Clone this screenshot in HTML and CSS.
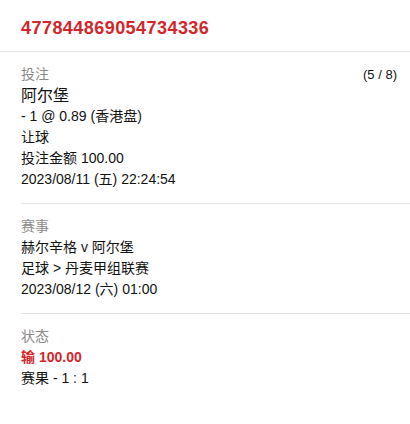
FILE: index.html
```html
<!DOCTYPE html>
<html lang="zh">
<head>
<meta charset="utf-8">
<link rel="stylesheet" href="styles.css">
</head>
<body>
<div class="page">
  <div class="header">477844869054734336</div>
  <div class="section">
    <div class="label-row"><span class="label">投注</span><span class="count">(5 / 8)</span></div>
    <div class="line big">阿尔堡</div>
    <div class="line">- 1 @ 0.89 (香港盘)</div>
    <div class="line">让球</div>
    <div class="line">投注金额 100.00</div>
    <div class="line">2023/08/11 (五) 22:24:54</div>
  </div>
  <div class="section">
    <div class="label">赛事</div>
    <div class="line">赫尔辛格 v 阿尔堡</div>
    <div class="line">足球 &gt; 丹麦甲组联赛</div>
    <div class="line">2023/08/12 (六) 01:00</div>
  </div>
  <div class="section last">
    <div class="label">状态</div>
    <div class="line loss">输 100.00</div>
    <div class="line">赛果 - 1 : 1</div>
  </div>
</div>
</body>
</html>
```
FILE: styles.css
```css
html, body {
  margin: 0;
  padding: 0;
  background: #fff;
}
body {
  font-family: "Liberation Sans", "Noto Sans CJK SC", sans-serif;
  font-size: 14px;
  color: #111;
}
.page {
  width: 410px;
}
.header {
  box-sizing: border-box;
  height: 52px;
  padding: 19px 21px 0;
  font-size: 18px;
  line-height: 18px;
  font-weight: bold;
  letter-spacing: 0.45px;
  color: #d3262b;
  border-bottom: 1px solid #e2e2e2;
}
.section {
  margin-left: 21px;
  padding: 12px 13px 13px 0;
  border-bottom: 1px solid #e2e2e2;
  line-height: 21px;
}
.section.last {
  border-bottom: none;
}
.label-row {
  display: flex;
  justify-content: space-between;
  align-items: center;
}
.label {
  color: #8a8a8a;
}
.count {
  font-size: 13px;
  color: #111;
}
.line.big {
  font-size: 16px;
}
.loss {
  color: #d3262b;
  font-weight: bold;
}
```
